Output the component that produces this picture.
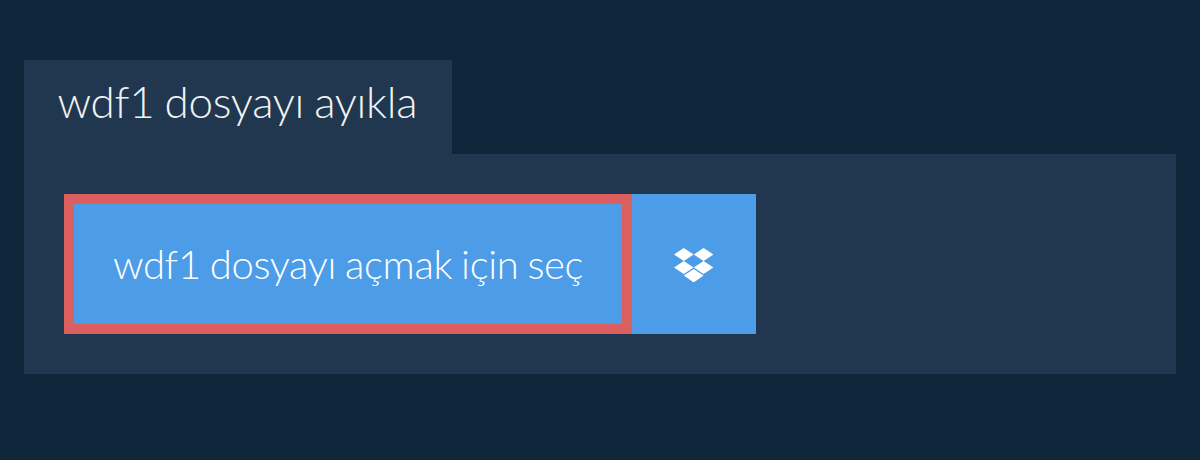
<div class="page">
  <h1 class="tab">wdf1 dosyayı ayıkla</h1>
  <div class="panel">
    <div class="buttons">
      <button class="main">wdf1 dosyayı açmak için seç</button>
      <button class="drop" aria-label="Dropbox">
        <svg width="40" height="36" viewBox="0 -1.5 40 36" fill="#fff">
          <path d="M9.8 0.5 L19.6 7 L9.8 13.5 L0 7 Z"/>
          <path d="M29.6 0.5 L39.4 7 L29.6 13.5 L19.8 7 Z"/>
          <path d="M0 20 L9.8 13.5 L19.6 20 L9.8 26.5 Z"/>
          <path d="M29.6 13.5 L39.4 20 L29.6 26.5 L19.8 20 Z"/>
          <path d="M19.7 21.5 L29.5 28 L19.7 35 L9.9 28 Z"/>
        </svg>
      </button>
    </div>
  </div>
</div>

<style>
  :global(body) { margin: 0; background: #0f253a; }
  .page { height: 460px; box-sizing: border-box; padding: 60px 24px 0; font-family: Lato, sans-serif; }
  .tab { display: block; width: 428px; margin: 0; height: 94px; box-sizing: border-box; padding: 18px 0 0 33.5px; background: #21374f; color: #f2f2f2; font-size: 44px; font-weight: 300; line-height: 46px; white-space: nowrap; letter-spacing: -0.3px; word-spacing: -1.5px; }
  .panel { background: #21374f; height: 220px; box-sizing: border-box; padding: 40px; }
  .buttons { display: flex; height: 140px; }
  button { border: 0; background: #4c9ce8; color: #fff; font-family: inherit; padding: 0; }
  .main { width: 568px; box-sizing: border-box; border: 10px solid #dc5f5f; font-size: 40px; font-weight: 300; letter-spacing: -0.35px; word-spacing: -1.5px; }
  .drop { width: 124px; display: flex; align-items: center; justify-content: center; }
</style>
